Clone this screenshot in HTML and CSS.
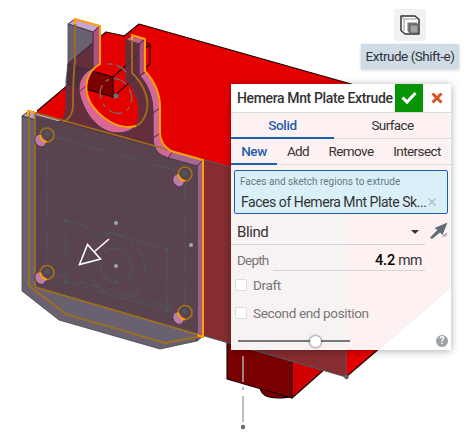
FILE: index.html
```html
<!DOCTYPE html>
<html lang="en">
<head>
<meta charset="utf-8">
<title>Extrude</title>
<link rel="stylesheet" href="styles.css">
</head>
<body>
<svg class="scene" width="470" height="444" viewBox="0 0 470 444">
  <!-- carriage body -->
  <g stroke="#150000" stroke-width="1.1" stroke-linejoin="round">
    <path fill="#7d0000" d="M260 387q1 11 18 11 10 0 15-2z"/>
    <path fill="#7b0000" d="M227 340V379L292 398V355z"/>
    <path fill="#d00000" d="M292 358V398L326 368z"/>
    <path fill="#e50000" stroke="none" d="M106 32L124 36L139 24L450 112V288L346 377L37 200V111L67 86L68 64z"/>
    <path fill="none" d="M68 64L106 32L125 36M123 37L139 24L450 112M450 288L346 377M37 111L68 85M113 97L150 64V44L131 38M113 77L150 44"/>
    <path fill="#7c0000" d="M68 64L113 77V97L68 84z"/>
  </g>
  <path fill="#862d31" stroke="#515b60" d="M35 113L346 199V377L35 287z"/>
  <!-- the body seen through the ring, below the top edge of the front face -->
  <path fill="#e50000" d="M86 90L100 115L117 128L136 127L142 118V143L86 127z"/>
  <!-- thickness of the plate -->
  <g stroke="#4b2739" stroke-width="1">
    <path fill="#c7a4d0" d="M68 24L75 19L100 26L93 32z"/>
    <path fill="#b25080" d="M93 32L100 26V64L93 68z"/>
    <path fill="#c66287" d="M126 40L132 35L145 39L139 44z"/>
    <path fill="#b85079" d="M139 44L145 39V72L139 76z"/>
    <path fill="#d2679a" d="M140 76L145 72C156 82 160 96 160 108V134Q160 145 173 151L203 160L197 166L168 158Q153 154 153 138V113Q153 91 140 76z"/>
    <path fill="#a66691" d="M168 158L173 151L203 160L197 166z"/>
    <path fill="#9d6089" d="M197 166L203 160V336L197 341z"/>
    <path fill="#b5a0c4" d="M22 116L29 111L62 120L52 125z"/>
    <path fill="#db6696" d="M93 68C80 74 77 86 80 96C85 115 100 133 117 133C126 133 132 131 136 126C118 131 99 117 90 102C83 88 86 72 100 64z"/>
    <path fill="none" d="M153 113L160 108M153 138L160 133M79 92L86 86"/>
  </g>
  <!-- front of the plate -->
  <path class="plate" d="M68 24L93 32V68C80 74 77 86 80 96C85 115 100 133 117 133C130 133 139 127 139 113C139 98 133 88 126 80V40L139 44V75C149 85 153 98 153 113V138L155 148L35 115V287L197 335V341L160 349L59 320L22 291V116L52 125Q66 122 66 107V80Q68 70 68 64z"/>
  <path fill="#59434e" d="M35 115L155 148Q159 156 168 158L197 166V335L35 287z"/>
  <path fill="none" stroke="#49414b" stroke-width=".8" d="M22 291V116L52 125Q66 122 66 107V80L68 64V24L93 32V68C80 74 77 86 80 96C85 115 100 133 117 133C130 133 139 127 139 113C139 98 133 88 126 80V40L139 44V75C149 85 153 98 153 113V138Q153 154 168 158M22 291L59 320L160 349L197 341V166L168 158"/>
  <!-- construction sketch -->
  <g fill="none" stroke="#515258" stroke-width="1.6" stroke-dasharray="23 5 4 5">
    <path d="M47 135L185 173V312L47 272z"/>
    <path d="M66 221L167 249V311L66 282z"/>
    <ellipse cx="117" cy="266" rx="27" ry="34" transform="rotate(-28 117 266)"/>
    <ellipse cx="116" cy="266" rx="15" ry="18" transform="rotate(-28 116 266)"/>
  </g>
  <g fill="#50565b">
    <circle cx="66" cy="221" r="2.2"/><circle cx="66" cy="282" r="2.2"/>
    <circle cx="167" cy="250" r="2.2"/><circle cx="167" cy="311" r="2.2"/><circle cx="116" cy="282" r="2"/>
  </g>
  <g fill="none" stroke="#806062" stroke-width="1.5" stroke-dasharray="14 5 4 5">
    <ellipse cx="116" cy="96" rx="15" ry="18" transform="rotate(-28 116 96)"/>
    <path d="M107 64H113M116 65Q122 67 126 72" stroke-dasharray="none"/>
  </g>
  <circle cx="116" cy="96" r="2.6" fill="#6d6c70"/>
  <g fill="#9ba9a9"><circle cx="116" cy="223" r="2"/><circle cx="116" cy="266" r="2"/><circle cx="191" cy="245" r="2"/></g>
  <!-- selection edges -->
  <g fill="none" stroke="#a06f1c" stroke-width="1.8">
    <path d="M75 19V61Q73 76 73 107Q72 118 63 122M29 111V286L66 314L165 343L203 336M35 113V287L200 335M29 111L173 151M132 35V73C146 86 150 103 146 113Q143 123 136 126"/>
  </g>
  <g fill="none" stroke="#ffa008" stroke-width="2">
    <path d="M75 24V19L100 26V64C86 72 83 88 90 102C99 117 118 131 136 126M132 40V35L145 39V71C156 83 160 96 160 107V133Q160 144 171 151L203 160V337L197 335M28 116V111L35 113"/>
  </g>
  <g>
    <g><ellipse cx="40.500" cy="140.500" rx="5.500" ry="6.500" fill="#bd7cae" stroke="#553849" transform="rotate(-30 40.500 140.500)"/><circle cx="47" cy="135" r="7" fill="#59434e" fill-opacity=".8" stroke="#a06f1c" stroke-width="1.700"/><circle cx="47" cy="134" r="2.800" fill="#50565b"/><path d="M40 135Q41 141 47 142" fill="none" stroke="#ffa008" stroke-width="2"/></g>
    <g transform="translate(138 40)"><ellipse cx="40.500" cy="140.500" rx="5.500" ry="6.500" fill="#bd7cae" stroke="#553849" transform="rotate(-30 40.500 140.500)"/><circle cx="47" cy="134" r="7" fill="#59434e" fill-opacity=".8" stroke="#a06f1c" stroke-width="1.700"/><circle cx="47" cy="134" r="2.800" fill="#50565b"/><path d="M40 134Q41 140 47 141" fill="none" stroke="#ffa008" stroke-width="2"/></g>
    <g transform="translate(0 137.500)"><ellipse cx="40.500" cy="140.500" rx="5.500" ry="6.500" fill="#bd7cae" stroke="#553849" transform="rotate(-30 40.500 140.500)"/><circle cx="47" cy="135" r="7" fill="#59434e" fill-opacity=".8" stroke="#a06f1c" stroke-width="1.700"/><circle cx="47" cy="134" r="2.800" fill="#50565b"/><path d="M40 135Q41 141 47 142" fill="none" stroke="#ffa008" stroke-width="2"/></g>
    <g transform="translate(138 177.500)"><ellipse cx="40.500" cy="140.500" rx="5.500" ry="6.500" fill="#bd7cae" stroke="#553849" transform="rotate(-30 40.500 140.500)"/><circle cx="47" cy="135" r="7" fill="#59434e" fill-opacity=".8" stroke="#a06f1c" stroke-width="1.700"/><circle cx="47" cy="134" r="2.800" fill="#50565b"/><path d="M40 135Q41 141 47 142" fill="none" stroke="#ffa008" stroke-width="2"/></g>
  </g>
  <path d="M109 239L94 252M87.500 244.500L79.500 264.500L100.500 259z" fill="none" stroke="#fff" stroke-width="1.600"/>
  <path d="M243 356V382M243 387V390M243 396V422" stroke="#a8acb1" stroke-opacity=".85" stroke-width="1.800"/>
  <circle cx="243" cy="427" r="2.200" fill="#626b74"/>
  <circle cx="346.500" cy="377" r="2.300" fill="#59636b"/>
</svg>

<div class="tool">
  <div class="tool-button">
    <svg width="20" height="20" viewBox="0 0 20 20">
      <path d="M1 1H15L19 4.500V19H5L1 15.500z" fill="#fff" stroke="#333" stroke-width="1.500" stroke-linejoin="round"/>
      <path d="M4 4H16.500M4 4V16M1.500 1.500L4 4" fill="none" stroke="#777" stroke-width=".8"/>
      <path d="M7.500 7.500H17L18 9V18H9L7.500 16z" fill="#777"/>
      <path d="M10 10H18V18H10z" fill="#a1a1a1" stroke="#555" stroke-width=".8"/>
    </svg>
  </div>
  <div class="tooltip"><span>Extrude (Shift-e)</span></div>
</div>

<section class="panel">
  <header class="head">
    <h1><span>Hemera Mnt Plate Extrude</span></h1>
    <button class="accept"><svg width="16" height="14" viewBox="0 0 16 14"><path d="M1.500 6.500L6 11L14.500 2" fill="none" stroke="#fff" stroke-width="3"/></svg></button>
    <button class="cancel"><svg width="12" height="12" viewBox="0 0 12 12"><path d="M1.500 1.500L10.500 10.500M10.500 1.500L1.500 10.500" stroke="#dc5222" stroke-width="3"/></svg></button>
  </header>
  <nav class="tabs kind"><span class="active solid">Solid</span><span class="surface">Surface</span></nav>
  <nav class="tabs operation"><span class="active new">New</span><span class="add">Add</span><span class="remove">Remove</span><span class="intersect">Intersect</span></nav>
  <div class="selection">
    <div class="caption">Faces and sketch regions to extrude</div>
    <div class="item"><span class="name">Faces of Hemera Mnt Plate Sk...</span><svg width="8" height="8" viewBox="0 0 8 8"><path d="M.5.5L7.500 7.500M7.500.5L.5 7.500" stroke="#a8b9bf" stroke-width="1.200"/></svg></div>
  </div>
  <div class="end-type">
    <div class="select"><span>Blind</span><i class="caret"></i></div>
    <svg width="20" height="18" viewBox="0 0 20 18"><path d="M1 15.500L8.500 8L5.500 6L18.500.5L13.500 13L11 10.500L3 17z" fill="#606b75"/><path d="M12.500 16L14.500 13.500L13.500 13L18.500 10.500L17 15L16 14z" fill="#a5abb0"/></svg>
  </div>
  <div class="depth"><label>Depth</label><div class="value"><b>4.2</b> <span>mm</span></div></div>
  <label class="check"><i></i><span>Draft</span></label>
  <label class="check"><i></i><span>Second end position</span></label>
  <footer>
    <div class="slider"><i></i></div>
    <div class="help">?</div>
  </footer>
</section>
</body>
</html>
```

FILE: styles.css
```css
* { box-sizing: border-box; }
body { margin: 0; width: 470px; height: 444px; overflow: hidden; position: relative; background: #fff; color: #333; font-family: Roboto, "Liberation Sans", sans-serif; }
.scene { display: block; }
.plate { fill: rgba(69, 58, 76, .8); fill-rule: evenodd; }

.tool { position: absolute; left: 361px; top: 9px; width: 98px; display: flex; flex-direction: column; align-items: center; gap: 3px; }
.tool-button { width: 32px; height: 32px; border-radius: 3px; background: #f1f1f1; display: flex; align-items: center; justify-content: center; }
.tooltip { width: 98px; height: 25px; background: #cfdbe5; box-shadow: 0 1px 3px rgba(0, 0, 0, .2); font-size: 13.500px; line-height: 25px; text-align: center; white-space: nowrap; color: #303438; letter-spacing: -.48px; }

.panel { position: absolute; left: 231px; top: 84px; width: 220px; height: 266px; background: rgba(255, 255, 255, .945); box-shadow: 0 1px 8px rgba(0, 0, 0, .32); display: flex; flex-direction: column; }
.head { height: 29px; flex: none; display: flex; background: #fff; border-bottom: 1px solid #d8dadb; }
.head h1 { margin: 0; padding-left: 6px; width: 164px; font-size: 14px; line-height: 29px; font-weight: 500; white-space: nowrap; letter-spacing: -.37px; }
.head button { border: 0; padding: 0; width: 28px; height: 28px; background: none; display: flex; align-items: center; justify-content: center; }
.head .accept { background: #079407; }

.tabs { display: flex; height: 26px; flex: none; font-size: 13.500px; line-height: 25px; letter-spacing: -.6px; border-bottom: 1px solid #dcdcdc; }
.tabs span { height: 26px; text-align: center; white-space: nowrap; }
.tabs .active { color: #1d5faf; font-weight: 500; letter-spacing: -.4px; border-bottom: 2px solid #1d5faf; }
.solid { width: 103px; }
.surface { width: 117px; }
.new { width: 46px; }
.add { width: 42px; }
.remove { width: 64px; }
.intersect { width: 68px; }

.selection { margin: 5px 3px 0; height: 44px; flex: none; border: 1px solid #1d5faf; border-radius: 2px; background: #daf0f8; padding: 5px 5px 0 5px; }
.caption { font-size: 10px; line-height: 12px; color: #637a83; white-space: nowrap; }
.item { display: flex; align-items: center; gap: 2px; padding-left: 1px; margin-top: 4px; height: 20px; font-size: 14px; letter-spacing: -.45px; white-space: nowrap; }

.end-type { display: flex; gap: 4px; height: 31px; flex: none; }
.select { width: 194px; display: flex; align-items: center; justify-content: space-between; padding: 5px 6px 0; font-size: 15px; letter-spacing: -.4px; border-bottom: 1px solid #d8d4d5; }
.end-type svg { margin-top: 8px; }
.caret { border: 4px solid transparent; border-top-color: #333; border-bottom: 0; }
.depth { display: flex; height: 26px; flex: none; padding-left: 5px; align-items: flex-end; gap: 5px; font-size: 13.500px; letter-spacing: -.8px; color: #767676; }
.depth label { width: 32px; padding-left: 1px; line-height: 20px; height: 21px; white-space: nowrap; }
.depth .value { width: 152px; padding-right: 3px; height: 21px; line-height: 21px; border-bottom: 1px solid #d8d4d5; text-align: right; font-size: 14px; letter-spacing: -.4px; color: #333; }
.value b { font-size: 14.500px; font-weight: 500; letter-spacing: -.1px; color: #000; }

.check { display: flex; align-items: center; gap: 6px; padding-left: 4px; height: 28px; flex: none; font-size: 13.500px; letter-spacing: -.35px; color: #767676; }
.check i { width: 12px; height: 12px; border: 1px solid #dcdcdc; border-radius: 2px; background: #fff; }
footer { display: flex; flex: 1; padding: 5px 3px 0 7px; justify-content: space-between; align-items: center; }
.slider { width: 112px; height: 2px; background: #777; display: flex; align-items: center; padding-left: 72px; }
.slider i { width: 11px; height: 11px; border-radius: 50%; background: #fff; box-shadow: 0 0 3px #333; }
.help { width: 12px; height: 12px; border-radius: 50%; background: #9da1a8; color: #fff; font-size: 10px; font-weight: 700; line-height: 12px; text-align: center; }
```
